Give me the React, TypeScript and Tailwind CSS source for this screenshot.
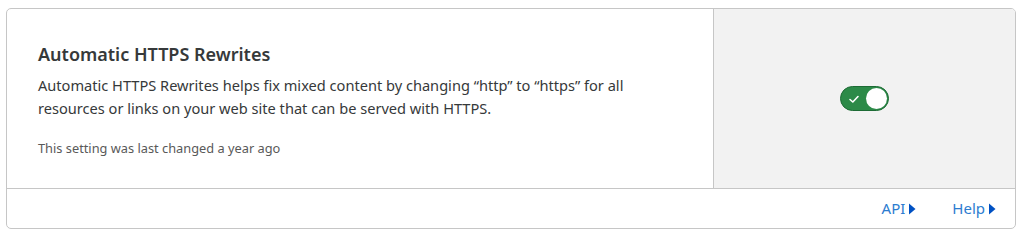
import React from 'react';

export default function App() {
    return (
        <div className="w-[1024px] h-[237px] bg-white pt-2 pl-1.5 pr-2 font-['Noto_Sans',sans-serif]">
            <div className="w-[1010px] h-[221px] border border-[#c6c6c6] rounded-[5px] flex flex-col overflow-hidden">
                <div className="flex h-[180px] border-b border-[#c6c6c6]">
                    <div className="flex-1 pl-[31px] pt-[32px]">
                        <h3 className="text-[18px] font-semibold text-[#36393a] leading-[26px]">Automatic HTTPS Rewrites</h3>
                        <p className="mt-[7px] text-[14.6px] leading-[23px] text-[#36393a] max-w-[630px]">
                            Automatic HTTPS Rewrites helps fix mixed content by changing “http” to “https” for all resources or links on your web site that can be served with HTTPS.
                        </p>
                        <p className="mt-[19px] text-[12.8px] text-[#595959]">This setting was last changed a year ago</p>
                    </div>
                    <div className="w-[302px] bg-[#f2f2f2] border-l border-[#c6c6c6] flex items-center justify-center">
                        <button className="w-[49px] h-[25px] rounded-full bg-[#2c8a48] border border-[#1d6b35] flex items-center justify-between pl-[7px] pr-[1px]">
                            <svg width="12" height="12" viewBox="0 0 12 12" fill="none">
                                <path d="M2 6.5 L4.8 9 L10 3.5" stroke="white" strokeWidth="1.6" strokeLinecap="round" strokeLinejoin="round" />
                            </svg>
                            <span className="w-[21px] h-[21px] rounded-full bg-white" />
                        </button>
                    </div>
                </div>
                <div className="flex-1 flex items-center justify-end gap-[36px] pr-[19px] text-[15px] text-[#2c7cd0]">
                    <a className="flex items-center gap-[3px]">API
                        <svg width="8" height="12" viewBox="0 0 8 12"><path d="M1 0.5 L7.5 6 L1 11.5 Z" fill="#0051c3" /></svg>
                    </a>
                    <a className="flex items-center gap-[3px]">Help
                        <svg width="8" height="12" viewBox="0 0 8 12"><path d="M1 0.5 L7.5 6 L1 11.5 Z" fill="#0051c3" /></svg>
                    </a>
                </div>
            </div>
        </div>
    );
}
